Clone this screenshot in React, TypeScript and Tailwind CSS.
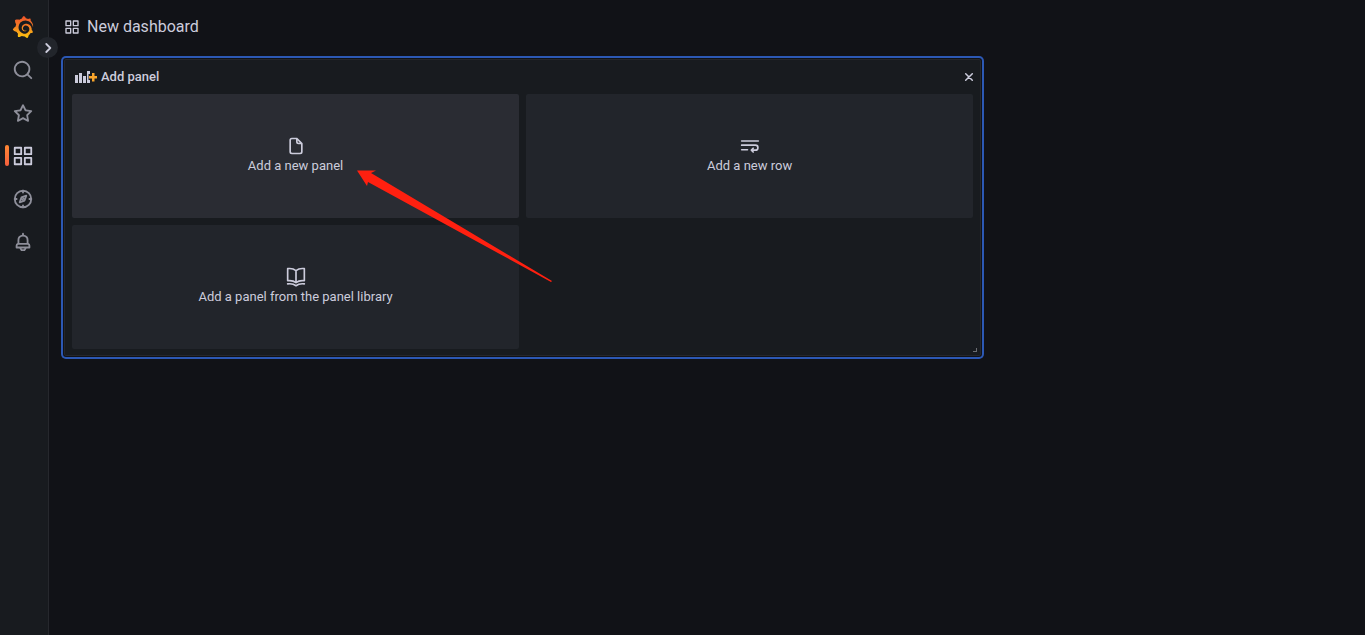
import { SiGrafana } from "react-icons/si";

const icons = {
  search: "M21.71,20.29,18,16.61A9,9,0,1,0,16.61,18l3.68,3.68a1,1,0,0,0,1.42,0A1,1,0,0,0,21.71,20.29ZM11,18a7,7,0,1,1,7-7A7,7,0,0,1,11,18Z",
  star: "M22,9.67A1,1,0,0,0,21.14,9l-5.69-.83L12.9,3a1,1,0,0,0-1.8,0L8.55,8.16,2.86,9a1,1,0,0,0-.81.68,1,1,0,0,0,.25,1l4.13,4-1,5.68A1,1,0,0,0,6.9,21.44L12,18.77l5.1,2.67a.93.93,0,0,0,.46.12,1,1,0,0,0,.59-.19,1,1,0,0,0,.4-1l-1-5.68,4.13-4A1,1,0,0,0,22,9.67Zm-6.15,4a1,1,0,0,0-.29.88l.72,4.2-3.76-2a1.06,1.06,0,0,0-.94,0l-3.76,2,.72-4.2a1,1,0,0,0-.29-.88l-3-3,4.21-.61a1,1,0,0,0,.76-.55L12,5.7l1.88,3.82a1,1,0,0,0,.76.55l4.21.61Z",
  apps: "M10,13H3a1,1,0,0,0-1,1v7a1,1,0,0,0,1,1h7a1,1,0,0,0,1-1V14A1,1,0,0,0,10,13ZM9,20H4V15H9ZM21,2H14a1,1,0,0,0-1,1v7a1,1,0,0,0,1,1h7a1,1,0,0,0,1-1V3A1,1,0,0,0,21,2ZM20,9H15V4h5Zm1,4H14a1,1,0,0,0-1,1v7a1,1,0,0,0,1,1h7a1,1,0,0,0,1-1V14A1,1,0,0,0,21,13Zm-1,7H15V15h5ZM10,2H3A1,1,0,0,0,2,3v7a1,1,0,0,0,1,1h7a1,1,0,0,0,1-1V3A1,1,0,0,0,10,2ZM9,9H4V4H9Z",
  bell: "M18,13.18V10a6,6,0,0,0-5-5.91V3a1,1,0,0,0-2,0V4.09A6,6,0,0,0,6,10v3.18A3,3,0,0,0,4,16v2a1,1,0,0,0,1,1H8.14a4,4,0,0,0,7.72,0H19a1,1,0,0,0,1-1V16A3,3,0,0,0,18,13.18ZM8,10a4,4,0,0,1,8,0v3H8Zm4,10a2,2,0,0,1-1.72-1h3.44A2,2,0,0,1,12,20Zm6-3H6V16a1,1,0,0,1,1-1H17a1,1,0,0,1,1,1Z",
  file: "M20,8.94a1.31,1.31,0,0,0-.06-.27l0-.09a1.07,1.07,0,0,0-.19-.28h0l-6-6h0a1.07,1.07,0,0,0-.28-.19l-.1,0A1.1,1.1,0,0,0,13.06,2H7A3,3,0,0,0,4,5V19a3,3,0,0,0,3,3H17a3,3,0,0,0,3-3V9S20,9,20,8.94ZM14,5.41,16.59,8H15a1,1,0,0,1-1-1ZM18,19a1,1,0,0,1-1,1H7a1,1,0,0,1-1-1V5A1,1,0,0,1,7,4h5V7a3,3,0,0,0,3,3h3Z",
};

const Icon = ({ path, className }: { path: string; className: string }) => (
  <svg viewBox="0 0 24 24" fill="currentColor" className={className} aria-hidden="true">
    <path d={path} />
  </svg>
);

const CompassIcon = ({ className }: { className: string }) => (
  <svg viewBox="0 0 24 24" fill="none" stroke="currentColor" strokeWidth="2" strokeLinecap="round" strokeLinejoin="round" className={className} aria-hidden="true">
    <circle cx="12" cy="12" r="9" />
    <path d="M12 3v2M12 19v2M3 12h2M19 12h2M15.6 8.4l-1.9 5.3-5.3 1.9 1.9-5.3zM11.5 12.5l1-1" />
  </svg>
);

const WrapIcon = ({ className }: { className: string }) => (
  <svg viewBox="0 0 24 24" fill="none" stroke="currentColor" strokeWidth="2" strokeLinecap="round" strokeLinejoin="round" className={className} aria-hidden="true">
    <path d="M2 6h20M2 11h16.5a2.7 2.7 0 0 1 0 6H14M2 16.5h7M15.8 14.7L13.6 17l2.2 2.2" />
  </svg>
);

const BookIcon = ({ className }: { className: string }) => (
  <svg viewBox="0 0 24 24" fill="none" stroke="currentColor" strokeWidth="2" strokeLinecap="round" strokeLinejoin="round" className={className} aria-hidden="true">
    <path d="M12 4.300C9.500 2.300 6 1.500 2 2v14.500c4-.5 7.500.2 10 2.200 2.500-2 6-2.700 10-2.200V2c-4-.5-7.500.3-10 2.300zM12 4.300V18M2 20.300c4-.5 7.500.2 10 2.200 2.500-2 6-2.700 10-2.200" />
  </svg>
);

const navItems = [
  { label: "Search", icon: <Icon path={icons.search} className="size-[22px]" /> },
  { label: "Starred", icon: <Icon path={icons.star} className="size-[22px]" /> },
  { label: "Dashboards", active: true, icon: <Icon path={icons.apps} className="size-[22px]" /> },
  { label: "Explore", icon: <CompassIcon className="size-[22px]" /> },
  { label: "Alerting", icon: <Icon path={icons.bell} className="size-[22px]" /> },
];

const Sidebar = () => (
  <nav className="relative w-[49px] shrink-0 border-r border-[#26282d] bg-[#181b1f] pt-[5px]">
    <a href="#home" aria-label="Home" className="flex h-[43px] w-[46px] items-center justify-center">
      <svg width="0" height="0" className="absolute">
        <linearGradient id="logo" x1="0" y1="0" x2="0" y2="1">
          <stop offset="0" stopColor="#f0532a" />
          <stop offset="0.45" stopColor="#f47b24" />
          <stop offset="1" stopColor="#fcc90e" />
        </linearGradient>
      </svg>
      <SiGrafana className="size-[22px]" style={{ fill: "url(#logo)" }} />
    </a>
    {navItems.map((item) => (
      <a
        key={item.label}
        href="#nav"
        aria-label={item.label}
        className={`relative flex h-[43px] w-[46px] items-center justify-center ${item.active ? "text-[#ccccdc]" : "text-[#8e8f9a]"}`}
      >
        {item.active && (
          <span className="absolute left-[5px] h-[21px] w-1 rounded-xs bg-linear-to-b from-[#ff8833] to-[#f55f3e]" />
        )}
        {item.icon}
      </a>
    ))}
    <button
      aria-label="Expand menu"
      className="absolute top-[37px] -right-[10px] flex size-[21px] items-center justify-center rounded-full bg-[#22252b] text-[#ccccdc]"
    >
      <svg viewBox="0 0 10 10" className="size-[10px]" fill="none" stroke="currentColor" strokeWidth="1.8" strokeLinecap="round" strokeLinejoin="round">
        <path d="M3.300 1L7.300 5 3.300 9" />
      </svg>
    </button>
  </nav>
);

const AddPanelIcon = () => (
  <svg viewBox="0 0 22 14" className="h-[14px] w-[22px]" aria-hidden="true">
    <path fill="#ccccdc" d="M0 5h3v8H0zM4 3h3v10H4zM8 6h3v7H8zM12 1h3v3h-1.500v6H15v3h-3z" />
    <path fill="#f9a52b" d="M17 3h2.500v3H22v2.500h-2.500v3H17v-3h-3V6h3z" />
  </svg>
);

const actions = [
  { label: "Add a new panel", highlighted: true, icon: <Icon path={icons.file} className="size-5" /> },
  { label: "Add a new row", icon: <WrapIcon className="size-5" /> },
  { label: "Add a panel from the panel library", icon: <BookIcon className="size-5" /> },
];

const AddPanel = () => (
  <section className="relative w-5/7 rounded-xs border border-[#25272c] bg-[#181b1f] px-[7px] pb-[6px] shadow-[0_0_0_1px_#111217,0_0_0_3px_#2c58b4]">
    <header className="flex h-[34px] items-center gap-1 pl-[3px]">
      <AddPanelIcon />
      <h2 className="flex-1 text-[13px] leading-5 font-medium">Add panel</h2>
      <button aria-label="Close" className="-mr-1 flex size-4 items-center justify-center">
        <svg viewBox="0 0 10 10" className="size-[10px]" stroke="currentColor" strokeWidth="1.500" strokeLinecap="round">
          <path d="M1.700 1.700l6.600 6.600M8.300 1.700L1.700 8.300" />
        </svg>
      </button>
    </header>
    <div className="grid grid-cols-2 gap-[7px]">
      {actions.map((action) => (
        <button
          key={action.label}
          className={`flex h-[124px] flex-col items-center justify-center rounded-xs text-[13px] leading-5 ${action.highlighted ? "bg-[#2a2c33]" : "bg-[#22252b]"}`}
        >
          {action.icon}
          {action.label}
        </button>
      ))}
    </div>
    <span className="absolute right-[3px] bottom-[3px] size-1 border-r border-b border-[#6b6d72]" />
    {/* pointer to the first action */}
    <svg viewBox="0 0 196 113" className="pointer-events-none absolute top-[110px] left-[292px] h-[113px] w-[196px]" aria-hidden="true">
      <path fill="#ff2010" d="M0 .5L19 .5 14 3 195 111 194 112 11 12 10 16z" />
    </svg>
  </section>
);

export default function App() {
  return (
    <div className="flex min-h-screen bg-[#111217] font-[Roboto,sans-serif] text-[#ccccdc]">
      <Sidebar />
      <main className="min-w-0 flex-1 pr-[17px] pl-[15px]">
        <header className="flex h-[59px] items-center gap-[7px] pb-[6px]">
          <Icon path={icons.apps} className="size-4" />
          <h1 className="text-base">New dashboard</h1>
        </header>
        <AddPanel />
      </main>
    </div>
  );
}
